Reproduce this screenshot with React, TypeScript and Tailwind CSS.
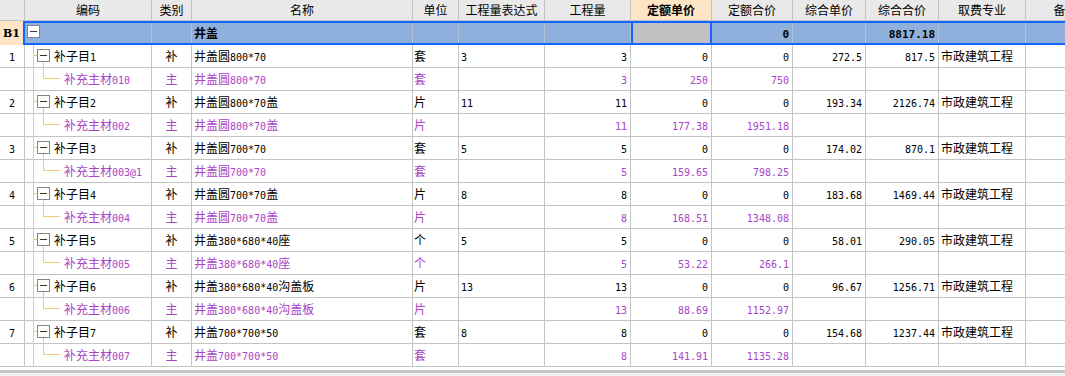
import { Fragment, ReactNode } from 'react';

const COLS =
  'grid grid-cols-[25px_127px_40px_221px_46px_86px_86px_81px_81px_73px_73px_87px_80px]';
const B1_COLS =
  'grid grid-cols-[127px_40px_221px_46px_86px_86px_81px_81px_73px_73px_87px_80px]';
const LINE = 'border-r border-b border-[#c4c4c4]';
const PURPLE = 'text-[#a844c6]';

// split ascii runs so digits get the narrow mono face like the original bitmap font
function T({ s, bold }: { s: string; bold?: boolean }) {
  const parts = s.split(/([\x00-\x7f]+)/).filter(Boolean);
  return (
    <span className="whitespace-nowrap">
      {parts.map((p, i) =>
        /^[\x00-\x7f]+$/.test(p) ? (
          <span
            key={i}
            className={
              bold
                ? "font-['DejaVu_Sans_Mono',monospace] text-[11px] font-bold"
                : "font-['DejaVu_Sans_Mono',monospace] text-[10px]"
            }
          >
            {p}
          </span>
        ) : (
          <span key={i} className={bold ? 'font-bold' : ''}>
            {p}
          </span>
        )
      )}
    </span>
  );
}

function Cell({ children, className = '' }: { children?: ReactNode; className?: string }) {
  return (
    <div className={`${LINE} flex items-center overflow-hidden whitespace-nowrap ${className}`}>
      {children}
    </div>
  );
}

function MinusBox({ className = '' }: { className?: string }) {
  return (
    <span className={`absolute w-[13px] h-[13px] border border-[#858585] bg-white ${className}`}>
      <span className="absolute left-[2px] top-[5px] w-[7px] h-px bg-[#333]" />
    </span>
  );
}

const headers = [
  '',
  '编码',
  '类别',
  '名称',
  '单位',
  '工程量表达式',
  '工程量',
  '定额单价',
  '定额合价',
  '综合单价',
  '综合合价',
  '取费专业',
  '备注',
];

const rows = [
  { n: '1', code: '补子目1', name: '井盖圆800*70', unit: '套', q: '3', zj: '272.5', zh: '817.5', sc: '补充主材010', dj: '250', dh: '750' },
  { n: '2', code: '补子目2', name: '井盖圆800*70盖', unit: '片', q: '11', zj: '193.34', zh: '2126.74', sc: '补充主材002', dj: '177.38', dh: '1951.18' },
  { n: '3', code: '补子目3', name: '井盖圆700*70', unit: '套', q: '5', zj: '174.02', zh: '870.1', sc: '补充主材003@1', dj: '159.65', dh: '798.25' },
  { n: '4', code: '补子目4', name: '井盖圆700*70盖', unit: '片', q: '8', zj: '183.68', zh: '1469.44', sc: '补充主材004', dj: '168.51', dh: '1348.08' },
  { n: '5', code: '补子目5', name: '井盖380*680*40座', unit: '个', q: '5', zj: '58.01', zh: '290.05', sc: '补充主材005', dj: '53.22', dh: '266.1' },
  { n: '6', code: '补子目6', name: '井盖380*680*40沟盖板', unit: '片', q: '13', zj: '96.67', zh: '1256.71', sc: '补充主材006', dj: '88.69', dh: '1152.97' },
  { n: '7', code: '补子目7', name: '井盖700*700*50', unit: '套', q: '8', zj: '154.68', zh: '1237.44', sc: '补充主材007', dj: '141.91', dh: '1135.28' },
];

function MainRow({ r }: { r: (typeof rows)[number] }) {
  return (
    <div className={`${COLS} h-[23px]`}>
      <Cell className="justify-center">
        <T s={r.n} />
      </Cell>
      <div className={`${LINE} relative flex items-center pl-[29px]`}>
        <span className="absolute left-[8px] top-0 bottom-[-1px] w-px bg-[#f9c47f]" />
        <span className="absolute left-[8px] top-[10px] w-[4px] h-px bg-[#f9c47f]" />
        <span className="absolute left-[18px] top-[17px] bottom-[-1px] w-px bg-[#f9c47f]" />
        <MinusBox className="left-[12px] top-[4px]" />
        <T s={r.code} />
      </div>
      <Cell className="justify-center">补</Cell>
      <Cell className="pl-[2px]">
        <T s={r.name} />
      </Cell>
      <Cell className="pl-px">{r.unit}</Cell>
      <Cell className="pl-[2px]">
        <T s={r.q} />
      </Cell>
      <Cell className="justify-end pr-[3px]">
        <T s={r.q} />
      </Cell>
      <Cell className="justify-end pr-[3px]">
        <T s="0" />
      </Cell>
      <Cell className="justify-end pr-[3px]">
        <T s="0" />
      </Cell>
      <Cell className="justify-end pr-[3px]">
        <T s={r.zj} />
      </Cell>
      <Cell className="justify-end pr-[3px]">
        <T s={r.zh} />
      </Cell>
      <Cell className="pl-[2px]">市政建筑工程</Cell>
      <Cell />
    </div>
  );
}

function SubRow({ r }: { r: (typeof rows)[number] }) {
  return (
    <div className={`${COLS} h-[23px] ${PURPLE}`}>
      <Cell />
      <div className={`${LINE} relative flex items-center pl-[39px]`}>
        <span className="absolute left-[8px] top-0 bottom-[-1px] w-px bg-[#f9c47f]" />
        <span className="absolute left-[18px] top-0 h-[11px] w-px bg-[#f9c47f]" />
        <span className="absolute left-[18px] top-[10px] w-[17px] h-px bg-[#f9c47f]" />
        <T s={r.sc} />
      </div>
      <Cell className="justify-center">主</Cell>
      <Cell className="pl-[2px]">
        <T s={r.name} />
      </Cell>
      <Cell className="pl-px">{r.unit}</Cell>
      <Cell />
      <Cell className="justify-end pr-[3px]">
        <T s={r.q} />
      </Cell>
      <Cell className="justify-end pr-[3px]">
        <T s={r.dj} />
      </Cell>
      <Cell className="justify-end pr-[3px]">
        <T s={r.dh} />
      </Cell>
      <Cell />
      <Cell />
      <Cell />
      <Cell />
    </div>
  );
}

function B1Row() {
  const sep = 'border-r border-[#b3c1d6] flex items-center overflow-hidden whitespace-nowrap';
  return (
    <div className="flex h-[24px]">
      <div className="w-[23px] shrink-0 bg-[#fde5c6] flex items-center justify-center font-['DejaVu_Serif',serif] text-[11px] font-bold">
        B1
      </div>
      <div className="w-[1100px] shrink-0 border-2 border-[#1466ff] bg-[#8fb0dc]">
        <div className={`${B1_COLS} h-full`}>
          <div className={`${sep} relative`}>
            <MinusBox className="left-[2px] top-[2px]" />
          </div>
          <div className={sep} />
          <div className={`${sep} pl-[2px]`}>
            <T s="井盖" bold />
          </div>
          <div className={sep} />
          <div className={sep} />
          <div className={sep} />
          <div className="border-x-2 border-[#1466ff] bg-[#c0c0c0]" />
          <div className={`${sep} justify-end pr-[3px]`}>
            <T s="0" bold />
          </div>
          <div className={sep} />
          <div className={`${sep} justify-end pr-[3px]`}>
            <T s="8817.18" bold />
          </div>
          <div className={sep} />
          <div className={sep} />
        </div>
      </div>
    </div>
  );
}

export default function App() {
  return (
    <div className="w-[1065px] h-[376px] overflow-hidden bg-white text-black text-[12px] leading-none font-['Noto_Sans_CJK_SC',sans-serif] flex flex-col">
      <div className={`${COLS} h-[21px] shrink-0 bg-[#e9e9e9]`}>
        {headers.map((h, i) => (
          <Cell
            key={i}
            className={`justify-center ${i === 7 ? 'bg-[#fde5c6] font-bold' : ''}`}
          >
            {h}
          </Cell>
        ))}
      </div>
      <B1Row />
      {rows.map((r) => (
        <Fragment key={r.n}>
          <MainRow r={r} />
          <SubRow r={r} />
        </Fragment>
      ))}
      <div className="h-[3px] shrink-0" />
      <div className="h-[3px] shrink-0 bg-[#c8c8c8]" />
      <div className="flex-1 bg-[#f0f0f0]" />
    </div>
  );
}
